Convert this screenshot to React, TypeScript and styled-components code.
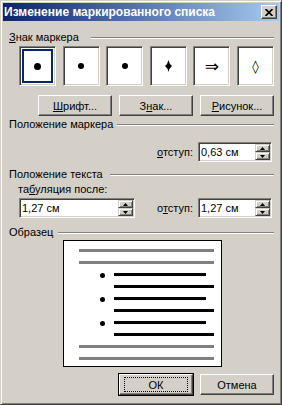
import styled, { createGlobalStyle } from "styled-components";

const GlobalStyle = createGlobalStyle`
  html, body {
    margin: 0;
    padding: 0;
    background: #d4d0c8;
  }
  body {
    font-family: "Liberation Sans", Arial, sans-serif;
    font-size: 11px;
    color: #000;
  }
`;

const Window = styled.div`
  box-sizing: border-box;
  width: 282px;
  height: 405px;
  background: #d4d0c8;
  border: 1px solid;
  border-color: #d4d0c8 #404040 #404040 #d4d0c8;
  box-shadow: inset 1px 1px #fff, inset -1px -1px #808080;
  padding: 2px;
  display: flex;
  flex-direction: column;
`;

const TitleBar = styled.div`
  height: 18px;
  flex-shrink: 0;
  display: flex;
  align-items: center;
  padding: 0 2px 0 1px;
  background: linear-gradient(to right, #0a246a, #a6caf0);
`;

const Title = styled.div`
  flex: 1;
  color: #fff;
  font-weight: bold;
  font-size: 12px;
  white-space: nowrap;
`;

const CloseButton = styled.div`
  box-sizing: border-box;
  width: 16px;
  height: 14px;
  background: #d4d0c8;
  border: 1px solid;
  border-color: #fff #404040 #404040 #fff;
  box-shadow: inset -1px -1px #808080;
  display: flex;
  align-items: center;
  justify-content: center;
`;

const Body = styled.div`
  flex: 1;
  display: flex;
  flex-direction: column;
  padding: 0 5px 0 6px;
`;

const GroupHeader = styled.div<{ $top: number }>`
  display: flex;
  align-items: center;
  height: 13px;
  line-height: 13px;
  margin-top: ${(p) => p.$top}px;
`;

const GroupLabel = styled.span<{ $w: number }>`
  width: ${(p) => p.$w}px;
  flex-shrink: 0;
  white-space: nowrap;
`;

const Rule = styled.div`
  flex: 1;
  height: 0;
  border-top: 1px solid #808080;
  border-bottom: 1px solid #fff;
`;

const Key = styled.u`
  text-decoration: underline;
  text-underline-offset: 1px;
`;

const BulletRow = styled.div`
  display: flex;
  justify-content: space-between;
  margin: 2px 0 0 10px;
`;

const BulletBox = styled.div<{ $selected?: boolean }>`
  box-sizing: border-box;
  width: 37px;
  height: 40px;
  background: #fff;
  border: 1px solid;
  border-color: #808080 #fff #fff #808080;
  box-shadow: inset 1px 1px #404040, inset -1px -1px #d4d0c8;
  display: flex;
  align-items: center;
  justify-content: center;
  outline: ${(p) => (p.$selected ? "2px solid #0a246a" : "none")};
  outline-offset: -5px;
`;

const Dot = styled.span<{ $size: number }>`
  width: ${(p) => p.$size}px;
  height: ${(p) => p.$size}px;
  border-radius: 50%;
  background: #000;
`;

const Glyph = styled.span<{ $size: number }>`
  font-family: "DejaVu Sans", sans-serif;
  font-size: ${(p) => p.$size}px;
  line-height: 1;
`;

const ButtonRow = styled.div<{ $top: number }>`
  display: flex;
  justify-content: flex-end;
  gap: 7px;
  margin-top: ${(p) => p.$top}px;
`;

const PushButton = styled.div<{ $default?: boolean }>`
  box-sizing: border-box;
  width: 74px;
  height: 21px;
  background: #d4d0c8;
  border: 1px solid;
  border-color: #fff #404040 #404040 #fff;
  box-shadow: inset -1px -1px #808080;
  display: flex;
  align-items: center;
  justify-content: center;
  outline: ${(p) => (p.$default ? "1px solid #000" : "none")};
`;

const FocusRing = styled.span`
  box-sizing: border-box;
  width: 64px;
  height: 15px;
  border: 1px dotted #000;
  display: flex;
  align-items: center;
  justify-content: center;
`;

const SpinRow = styled.div<{ $top: number }>`
  display: flex;
  align-items: center;
  margin-top: ${(p) => p.$top}px;
`;

const SpinGroup = styled.div`
  margin-left: auto;
  margin-right: 2px;
  display: flex;
  align-items: center;
  gap: 5px;
`;

const SpinBox = styled.div<{ $w: number; $left?: number }>`
  box-sizing: border-box;
  width: ${(p) => p.$w}px;
  height: 20px;
  margin-left: ${(p) => p.$left ?? 0}px;
  background: #fff;
  border: 1px solid;
  border-color: #808080 #fff #fff #808080;
  box-shadow: inset 1px 1px #404040, inset -1px -1px #d4d0c8;
  display: flex;
  padding: 1px 1px 1px 2px;
`;

const SpinText = styled.span`
  flex: 1;
  line-height: 16px;
  white-space: nowrap;
`;

const SpinButtons = styled.div`
  width: 15px;
  display: flex;
  flex-direction: column;
`;

const SpinHalf = styled.div`
  box-sizing: border-box;
  height: 8px;
  background: #d4d0c8;
  border: 1px solid;
  border-color: #d4d0c8 #404040 #404040 #d4d0c8;
  box-shadow: inset 1px 1px #fff, inset -1px -1px #808080;
  display: flex;
  align-items: center;
  justify-content: center;
`;

const FieldLabel = styled.div<{ $top: number; $left: number }>`
  height: 13px;
  line-height: 13px;
  margin: ${(p) => p.$top}px 0 0 ${(p) => p.$left}px;
`;

const Sample = styled.div`
  box-sizing: border-box;
  width: 159px;
  height: 127px;
  margin: 1px 0 0 54px;
  background: #fff;
  border: 1px solid #000;
  padding: 8px 0 0 15px;
  display: flex;
  flex-direction: column;
  gap: 9px;
`;

const SampleLine = styled.div<{ $w: number; $dark?: boolean; $indent?: number }>`
  height: 3px;
  width: ${(p) => p.$w}px;
  margin-left: ${(p) => p.$indent ?? 0}px;
  background: ${(p) => (p.$dark ? "#000" : "#808080")};
  flex-shrink: 0;
`;

const SampleBulletRow = styled.div`
  display: flex;
  align-items: flex-start;
  height: 3px;
`;

const SampleDot = styled.span`
  width: 5px;
  height: 5px;
  border-radius: 50%;
  background: #000;
  margin: 0 9px 0 21px;
  flex-shrink: 0;
`;

function Arrow({ down }: { down?: boolean }) {
  return (
    <svg width="5" height="3" viewBox="0 0 5 3">
      <polygon points={down ? "0,0 5,0 2.5,3" : "2.5,0 5,3 0,3"} fill="#000" />
    </svg>
  );
}

function Spin({ value, width, left }: { value: string; width: number; left?: number }) {
  return (
    <SpinBox $w={width} $left={left}>
      <SpinText>{value}</SpinText>
      <SpinButtons>
        <SpinHalf>
          <Arrow />
        </SpinHalf>
        <SpinHalf>
          <Arrow down />
        </SpinHalf>
      </SpinButtons>
    </SpinBox>
  );
}

export default function App() {
  return (
    <>
      <GlobalStyle />
      <Window>
        <TitleBar>
          <Title>Изменение маркированного списка</Title>
          <CloseButton>
            <svg width="8" height="7" viewBox="0 0 8 7">
              <path d="M0.5 0 L7.5 7 M7.5 0 L0.5 7" stroke="#000" strokeWidth="1.7" />
            </svg>
          </CloseButton>
        </TitleBar>
        <Body>
          <GroupHeader $top={10}>
            <GroupLabel $w={82}>
              <Key>З</Key>нак маркера
            </GroupLabel>
            <Rule />
          </GroupHeader>
          <BulletRow>
            <BulletBox $selected>
              <Dot $size={7} />
            </BulletBox>
            <BulletBox>
              <Dot $size={6} />
            </BulletBox>
            <BulletBox>
              <Dot $size={6} />
            </BulletBox>
            <BulletBox>
              <svg width="7" height="12" viewBox="0 0 7 12">
                <path d="M3.5 0 Q4.3 4 7 6 Q4.3 8 3.5 12 Q2.7 8 0 6 Q2.7 4 3.5 0Z" fill="#000" />
              </svg>
            </BulletBox>
            <BulletBox>
              <Glyph $size={17}>⇒</Glyph>
            </BulletBox>
            <BulletBox>
              <Glyph $size={13}>◊</Glyph>
            </BulletBox>
          </BulletRow>
          <ButtonRow $top={9}>
            <PushButton>
              <span>
                <Key>Ш</Key>рифт...
              </span>
            </PushButton>
            <PushButton>
              <span>
                З<Key>н</Key>ак...
              </span>
            </PushButton>
            <PushButton>
              <span>
                <Key>Р</Key>исунок...
              </span>
            </PushButton>
          </ButtonRow>

          <GroupHeader $top={2}>
            <GroupLabel $w={108}>Положение маркера</GroupLabel>
            <Rule />
          </GroupHeader>
          <SpinRow $top={11}>
            <SpinGroup>
              <span>
                <Key>о</Key>тступ:
              </span>
              <Spin value="0,63 см" width={74} />
            </SpinGroup>
          </SpinRow>

          <GroupHeader $top={6}>
            <GroupLabel $w={101}>Положение текста</GroupLabel>
            <Rule />
          </GroupHeader>
          <FieldLabel $top={2} $left={9}>
            та<Key>б</Key>уляция после:
          </FieldLabel>
          <SpinRow $top={2}>
            <Spin value="1,27 см" width={116} left={10} />
            <SpinGroup>
              <span>
                о<Key>т</Key>ступ:
              </span>
              <Spin value="1,27 см" width={74} />
            </SpinGroup>
          </SpinRow>

          <GroupHeader $top={8}>
            <GroupLabel $w={49}>Образец</GroupLabel>
            <Rule />
          </GroupHeader>
          <Sample>
            <SampleLine $w={135} />
            <SampleLine $w={135} />
            <SampleBulletRow>
              <SampleDot />
              <SampleLine $w={92} $dark />
            </SampleBulletRow>
            <SampleLine $w={100} $dark $indent={35} />
            <SampleBulletRow>
              <SampleDot />
              <SampleLine $w={92} $dark />
            </SampleBulletRow>
            <SampleLine $w={100} $dark $indent={35} />
            <SampleBulletRow>
              <SampleDot />
              <SampleLine $w={92} $dark />
            </SampleBulletRow>
            <SampleLine $w={100} $dark $indent={35} />
            <SampleLine $w={135} />
            <SampleLine $w={135} />
          </Sample>

          <ButtonRow $top={7}>
            <PushButton $default>
              <FocusRing>ОК</FocusRing>
            </PushButton>
            <PushButton>Отмена</PushButton>
          </ButtonRow>
        </Body>
      </Window>
    </>
  );
}
